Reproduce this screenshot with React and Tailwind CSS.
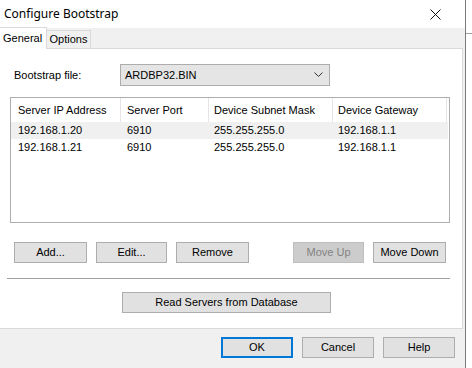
import React from "react";

const ui = { fontFamily: '"Liberation Sans", Arial, sans-serif' };
const title = { fontFamily: '"Noto Sans", "Open Sans", sans-serif' };

function Btn({ children, w = "w-[72px]", disabled = false, primary = false }) {
  const cls = disabled
    ? "bg-[#cccccc] border border-[#bfbfbf] text-[#838383]"
    : primary
    ? "bg-[#e1e1e1] border-2 border-[#0078d7] text-black"
    : "bg-[#e1e1e1] border border-[#adadad] text-black";
  return (
    <div className={`${w} h-[21px] flex items-center justify-center text-[11px] leading-none ${cls}`}>
      {children}
    </div>
  );
}

const rows = [
  ["192.168.1.20", "6910", "255.255.255.0", "192.168.1.1"],
  ["192.168.1.21", "6910", "255.255.255.0", "192.168.1.1"],
];

export default function App() {
  return (
    <div className="w-[472px] h-[368px] flex bg-white overflow-hidden" style={ui}>
      <div className="w-[466px] h-[368px] flex flex-col bg-[#f0f0f0] border-r border-[#7a7a7a]">
        {/* title bar */}
        <div className="h-[28px] bg-white flex items-center justify-between pl-[4px] pr-[24px]">
          <span className="text-[12px] text-black" style={title}>Configure Bootstrap</span>
          <svg width="11" height="11" viewBox="0 0 11 11">
            <path d="M0.5 0.5 L10.5 10.5 M10.5 0.5 L0.5 10.5" stroke="#111" strokeWidth="1" />
          </svg>
        </div>
        {/* tabs */}
        <div className="h-[20px] flex items-end relative">
          <div className="w-[47px] h-[22px] -mb-px bg-white border-t border-r border-[#d9d9d9] flex items-center pl-[3px] text-[11px] text-black relative z-10">
            General
          </div>
          <div className="w-[44px] h-[18px] bg-[#f0f0f0] border-t border-r border-[#d9d9d9] flex items-center justify-center text-[11px] text-black">
            Options
          </div>
        </div>
        {/* tab page */}
        <div className="w-[463px] h-[281px] bg-white border-r border-b border-[#d9d9d9] border-t border-t-[#d9d9d9] flex flex-col">
          <div className="flex items-center mt-[15px] h-[22px]">
            <span className="w-[120px] pl-[14px] text-[11px] text-black">Bootstrap file:</span>
            <div className="w-[210px] h-[22px] bg-[#e5e5e5] border border-[#adadad] flex items-center justify-between pl-[4px] pr-[6px] text-[11px] text-black">
              <span>ARDBP32.BIN</span>
              <svg width="9" height="6" viewBox="0 0 9 6">
                <path d="M0.5 0.5 L4.5 4.5 L8.5 0.5" stroke="#333" strokeWidth="1" fill="none" />
              </svg>
            </div>
          </div>
          {/* list view */}
          <div className="ml-[10px] mt-[11px] w-[440px] h-[126px] border border-[#adadad] bg-white flex flex-col text-[11px] text-black">
            <div className="h-[24px] flex">
              <div className="w-[110px] pl-[7px] flex items-center border-r border-[#e5e5e5]">Server IP Address</div>
              <div className="w-[88px] pl-[6px] flex items-center border-r border-[#e5e5e5]">Server Port</div>
              <div className="w-[124px] pl-[5px] flex items-center border-r border-[#e5e5e5]">Device Subnet Mask</div>
              <div className="w-[114px] pl-[5px] flex items-center border-r border-[#e5e5e5]">Device Gateway</div>
            </div>
            {rows.map((r, i) => (
              <div key={i} className={`h-[17px] flex ${i === 0 ? "bg-[#f0f0f0]" : ""} w-[437px]`}>
                <div className="w-[110px] pl-[7px] flex items-center">{r[0]}</div>
                <div className="w-[88px] pl-[6px] flex items-center">{r[1]}</div>
                <div className="w-[124px] pl-[5px] flex items-center">{r[2]}</div>
                <div className="w-[114px] pl-[5px] flex items-center">{r[3]}</div>
              </div>
            ))}
          </div>
          {/* buttons */}
          <div className="flex mt-[19px] pl-[14px] pr-[16px]">
            <div className="flex gap-[9px]">
              <Btn w="w-[73px]">Add...</Btn>
              <Btn w="w-[71px]">Edit...</Btn>
              <Btn w="w-[73px]">Remove</Btn>
            </div>
            <div className="flex gap-[9px] ml-auto">
              <Btn w="w-[71px]" disabled>Move Up</Btn>
              <Btn w="w-[73px]">Move Down</Btn>
            </div>
          </div>
          <div className="ml-[7px] mt-[15px] w-[443px] h-[2px] border-t border-[#a0a0a0] border-b border-b-white" />
          <div className="flex mt-[12px] pl-[122px]">
            <Btn w="w-[209px]">Read Servers from Database</Btn>
          </div>
        </div>
        {/* bottom buttons */}
        <div className="flex justify-end gap-[9px] pr-[10px] mt-[8px]">
          <Btn primary>OK</Btn>
          <Btn>Cancel</Btn>
          <Btn>Help</Btn>
        </div>
      </div>
      <div className="flex-1 flex flex-col">
        <div className="h-[34px] border-b border-[#a0a0a0]" />
      </div>
    </div>
  );
}
